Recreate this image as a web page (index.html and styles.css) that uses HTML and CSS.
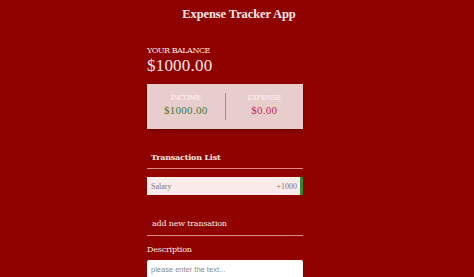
FILE: index.html
```html
<!DOCTYPE html>
<html>
<head>
<meta charset="utf-8">
<link rel="stylesheet" href="styles.css">
</head>
<body>
<h2 class="title">Expense Tracker App</h2>
<div class="container">
  <div class="balance-label">YOUR BALANCE</div>
  <div class="balance">$1000.00</div>
  <div class="card">
    <div class="col">
      <div class="col-label">INCOME</div>
      <div class="money plus">$1000.00</div>
    </div>
    <div class="divider"></div>
    <div class="col">
      <div class="col-label">EXPENSE</div>
      <div class="money minus">$0.00</div>
    </div>
  </div>
  <div class="section">Transaction List</div>
  <div class="item"><span>Salary</span><span>+1000</span></div>
  <div class="section add">add new transation</div>
  <div class="field-label">Description</div>
  <input class="input" type="text" placeholder="please enter the text...">
</div>
</body>
</html>
```
FILE: styles.css
```css
body {
  margin: 0;
  background: #8f0200;
  font-family: "DejaVu Serif", "Liberation Serif", serif;
  color: #fbe8e8;
  height: 277px;
  overflow: hidden;
}
.title {
  margin: 0;
  padding-top: 6px;
  padding-left: 4px;
  text-align: center;
  font-family: "Liberation Serif", serif;
  font-size: 12.5px;
  font-weight: bold;
  letter-spacing: -0.1px;
  height: 22px;
  line-height: 16px;
}
.container {
  width: 156px;
  margin-left: 147px;
  padding-top: 18px;
}
.balance-label {
  font-size: 8px;
  letter-spacing: -0.5px;
  line-height: 10px;
}
.balance {
  font-size: 17px;
  line-height: 20px;
  font-family: "Liberation Serif", serif;
  letter-spacing: 0.2px;
}
.card {
  margin-top: 8px;
  height: 45px;
  background: #e8cdcd;
  display: flex;
  align-items: center;
  box-shadow: 0 1px 3px rgba(0,0,0,0.3);
}
.col {
  flex: 1;
  text-align: center;
  padding-bottom: 3px;
}
.divider {
  width: 1px;
  height: 27px;
  background: #a88a8a;
}
.col-label {
  font-size: 7px;
  color: #fdf4f4;
  letter-spacing: -0.3px;
  line-height: 10px;
}
.money {
  font-size: 11px;
  line-height: 14px;
  font-family: "Liberation Serif", serif;
  letter-spacing: 0.3px;
}
.plus { color: #3b7a3b; }
.minus { color: #c42c4a; }
.section {
  margin-top: 22px;
  padding-left: 4px;
  font-size: 8px;
  font-weight: bold;
  line-height: 12px;
  padding-bottom: 5px;
  border-bottom: 1px solid #d98a8a;
  letter-spacing: -0.2px;
}
.section.add {
  margin-top: 23px;
  padding-left: 5px;
  font-weight: normal;
  padding-bottom: 5px;
}
.item {
  margin-top: 8px;
  height: 18px;
  background: #fcebeb;
  border-right: 3px solid #2e8b2e;
  display: flex;
  justify-content: space-between;
  align-items: center;
  padding: 0 3px 0 4px;
  font-size: 8px;
  color: #8a7070;
  font-family: "Liberation Serif", serif;
}
.field-label {
  margin-top: 8px;
  font-size: 8px;
  line-height: 12px;
  letter-spacing: -0.2px;
}
.input {
  display: block;
  margin-top: 4px;
  width: 156px;
  height: 18px;
  box-sizing: border-box;
  border: none;
  border-radius: 2px;
  background: #fff;
  padding: 0 4px;
  font-family: "Liberation Sans", sans-serif;
  font-size: 7.5px;
}
.input::placeholder { color: #8a8a8a; }
```
